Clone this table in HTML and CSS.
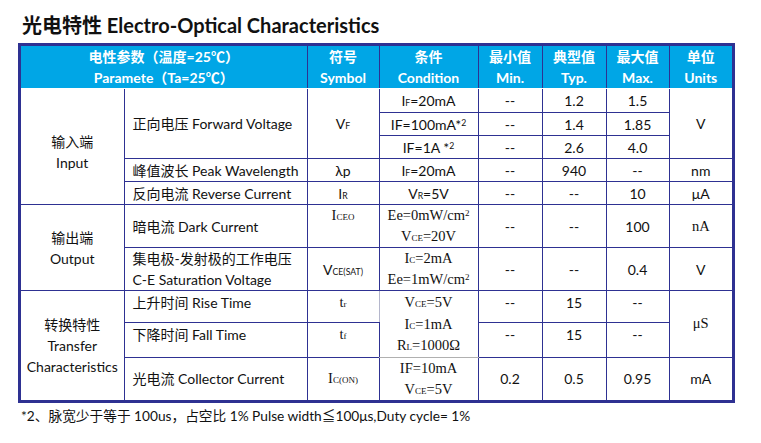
FILE: index.html
```html
<!DOCTYPE html>
<html lang="zh-CN">
<head>
<meta charset="utf-8">
<title>光电特性 Electro-Optical Characteristics</title>
<link rel="stylesheet" href="styles.css">
</head>
<body>
<h1 class="title">光电特性 Electro-Optical Characteristics</h1>
<div class="frame">
<table class="spec">
<colgroup>
<col class="c-grp"><col class="c-name"><col class="c-sym"><col class="c-cond">
<col class="c-num"><col class="c-num"><col class="c-num2"><col class="c-num2">
</colgroup>
<thead>
<tr>
<th colspan="2">电性参数（温度=25℃）<br>Paramete（Ta=25℃）</th>
<th>符号<br>Symbol</th>
<th>条件<br>Condition</th>
<th>最小值<br>Min.</th>
<th>典型值<br>Typ.</th>
<th>最大值<br>Max.</th>
<th>单位<br>Units</th>
</tr>
</thead>
<tbody>
<tr class="h24">
<td rowspan="5" class="grp grp-low">输入端<br>Input</td>
<td rowspan="3" class="name">正向电压 Forward Voltage</td>
<td rowspan="3">V<sub>F</sub></td>
<td>I<sub>F</sub>=20mA</td>
<td>--</td><td>1.2</td><td>1.5</td>
<td rowspan="3">V</td>
</tr>
<tr class="h23">
<td>IF=100mA*<sup>2</sup></td>
<td>--</td><td>1.4</td><td>1.85</td>
</tr>
<tr class="h23">
<td>IF=1A *<sup>2</sup></td>
<td>--</td><td>2.6</td><td>4.0</td>
</tr>
<tr class="h23">
<td class="name">峰值波长 Peak Wavelength</td>
<td>λp</td>
<td>I<sub>F</sub>=20mA</td>
<td>--</td><td>940</td><td>--</td><td>nm</td>
</tr>
<tr class="h23">
<td class="name">反向电流 Reverse Current</td>
<td>I<sub>R</sub></td>
<td>V<sub>R</sub>=5V</td>
<td>--</td><td>--</td><td>10</td><td>μA</td>
</tr>
<tr class="h43">
<td rowspan="2" class="grp">输出端<br>Output</td>
<td class="name">暗电流 Dark Current</td>
<td class="serif top">I<sub>CEO</sub></td>
<td class="serif">Ee=0mW/cm<sup>2</sup><br>V<sub>CE</sub>=20V</td>
<td>--</td><td>--</td><td>100</td><td class="serif">nA</td>
</tr>
<tr class="h42">
<td class="name">集电极-发射极的工作电压<br>C-E Saturation Voltage</td>
<td>V<sub>CE(SAT)</sub></td>
<td class="serif">I<sub>C</sub>=2mA<br>Ee=1mW/cm<sup>2</sup></td>
<td>--</td><td>--</td><td>0.4</td><td>V</td>
</tr>
<tr class="h31 up">
<td rowspan="3" class="grp">转换特性<br>Transfer<br>Characteristics</td>
<td class="name">上升时间 Rise Time</td>
<td class="serif soft-r">t<sub>r</sub></td>
<td rowspan="2" class="serif soft-b cond3">V<sub>CE</sub>=5V<br>I<sub>C</sub>=1mA<br>R<sub>L</sub>=1000Ω</td>
<td>--</td><td>15</td><td>--</td>
<td rowspan="2" class="serif mid">μS</td>
</tr>
<tr class="h33 up">
<td class="name">下降时间 Fall Time</td>
<td class="serif soft-r">t<sub>f</sub></td>
<td>--</td><td>15</td><td>--</td>
</tr>
<tr class="h42">
<td class="name">光电流 Collector Current</td>
<td class="serif">I<sub>C(ON)</sub></td>
<td class="serif">IF=10mA<br>V<sub>CE</sub>=5V</td>
<td>0.2</td><td>0.5</td><td>0.95</td><td>mA</td>
</tr>
</tbody>
</table>
</div>
<p class="note">*2、脉宽少于等于 100us，占空比 1% Pulse width≦100μs,Duty cycle= 1%</p>
</body>
</html>
```

FILE: styles.css
```css
html, body {
  margin: 0;
  padding: 0;
  background: #ffffff;
}

body {
  font-family: Lato, "Noto Sans CJK SC", sans-serif;
  color: #111111;
}

.title {
  margin: 0;
  padding: 12px 0 0 22px;
  height: 43px;
  box-sizing: border-box;
  font-size: 20px;
  line-height: 26px;
  font-weight: 700;
  color: #111111;
}

.frame {
  margin-left: 18px;
  width: 711px;
  border: 3px solid #2e3192;
}

.spec {
  width: 711px;
  table-layout: fixed;
  border-collapse: collapse;
  border-style: hidden;
  font-size: 14px;
}

.c-grp { width: 103px; }
.c-name { width: 183px; }
.c-sym { width: 72px; }
.c-cond { width: 99px; }
.c-num { width: 64px; }
.c-num2 { width: 63px; }

.spec th,
.spec td {
  border: 1px solid #2e3192;
  padding: 0;
  text-align: center;
  vertical-align: middle;
  line-height: 21px;
  white-space: nowrap;
  overflow: hidden;
}

.spec th {
  background: #00a6e6;
  color: #ffffff;
  font-weight: 700;
  font-size: 14px;
  height: 42px;
  border-bottom-color: #ffffff;
}

.spec td.name {
  text-align: left;
  padding-left: 8px;
}

.spec td.grp {
  line-height: 21px;
}

.spec td.grp-low {
  padding-top: 10px;
}

.spec td.top {
  vertical-align: top;
}

.spec tr.up td {
  vertical-align: top;
  padding-top: 1px;
}

.spec tr.up td.grp,
.spec tr.up td.mid {
  vertical-align: middle;
  padding-top: 0;
}

.spec tr.up td.cond3 {
  padding-top: 1px;
  line-height: 21.5px;
}

.spec .serif {
  font-family: "Liberation Serif", "Noto Serif CJK SC", serif;
  font-size: 14.5px;
}

.spec td.soft-r {
  border-right-color: #b4b6cc;
}

.spec td.soft-b {
  border-bottom-color: #b0b0b0;
}

.h24 { height: 24px; }
.h23 { height: 23px; }
.h43 { height: 43px; }
.h42 { height: 42px; }
.h31 { height: 31px; }
.h33 { height: 33px; }

sub {
  font-size: 0.62em;
  vertical-align: baseline;
  line-height: 0;
}

sup {
  font-size: 0.62em;
  vertical-align: 0.5em;
  line-height: 0;
}

.note {
  margin: 0;
  padding: 3px 0 0 21px;
  font-size: 13.7px;
  line-height: 19px;
  color: #111111;
}
```
